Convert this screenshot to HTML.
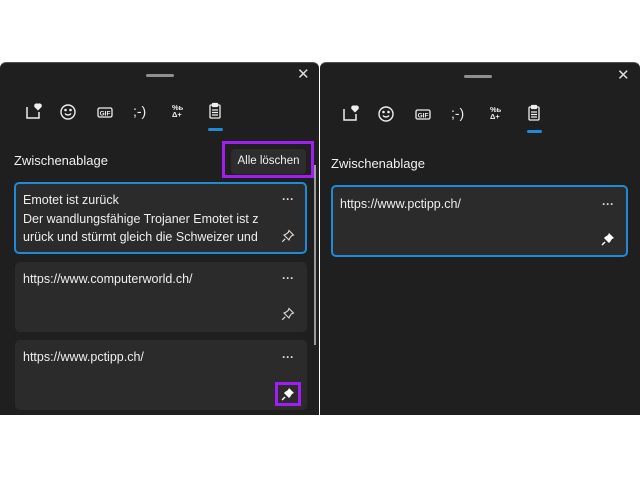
<!DOCTYPE html>
<html><head><meta charset="utf-8"><style>
*{margin:0;padding:0;box-sizing:border-box}
body{width:640px;height:480px;background:#fff;position:relative;overflow:hidden;font-family:"Liberation Sans",sans-serif;color:#f0f0f0}
.p{position:absolute;top:62px;height:353px;background:#1f1f1f;border-top:1px solid #555;border-radius:6px 6px 0 0}
.a{position:absolute}
.h{height:3px;width:28px;background:#8f8f8f;border-radius:2px}
.x{font-size:15px;color:#ddd;line-height:1}
.t{font-size:13px}
.card{position:absolute;background:#2b2b2b;border-radius:5px}
.sel{border:2px solid #1f8ad8}
.dots{position:absolute;font-size:12px;font-weight:bold;color:#ddd;line-height:1}
.ic{position:absolute;width:18px;height:18px}
.ul{height:3px;width:15px;background:#1f8ad8;border-radius:2px}
.tx{position:absolute;font-size:12.5px;line-height:18.5px;color:#eee}
</style></head><body>

<div class="p" style="left:0;width:319px"></div>
<div class="p" style="left:320px;width:320px"></div>

<!-- left -->
<div class="a h" style="left:146px;top:74px"></div>
<div class="a x" style="left:297px;top:67px">✕</div>
<svg class="ic" style="left:24px;top:103px" viewBox="0 0 18 18" fill="none" stroke="#eee" stroke-width="1.5"><path d="M3 4v11h12V9"/><path d="M11 2c1-1.5 3-1 3 .5 0-1.5 2-2 3-.5v1.5l-3 3-3-3z" fill="#eee"/></svg>
<svg class="ic" style="left:59px;top:103px" viewBox="0 0 18 18" fill="none" stroke="#eee" stroke-width="1.4"><circle cx="9" cy="9" r="7"/><path d="M6 10.5c1.5 2 4.5 2 6 0"/><circle cx="6.5" cy="7" r=".6" fill="#eee"/><circle cx="11.5" cy="7" r=".6" fill="#eee"/></svg>
<svg class="ic" style="left:96px;top:103px" viewBox="0 0 18 18"><rect x="2" y="5" width="14" height="9" rx="1.5" fill="none" stroke="#eee" stroke-width="1.3"/><text x="9" y="12.3" font-size="6.5" font-weight="bold" fill="#eee" text-anchor="middle" font-family="Liberation Sans">GIF</text></svg>
<div class="a" style="left:133px;top:103px;font-size:14px;color:#eee">;-)</div>
<div class="a" style="left:172px;top:104px;font-size:7.5px;line-height:7px;font-weight:bold;color:#eee">%ь<br>Δ+</div>
<svg class="ic" style="left:206px;top:102px" viewBox="0 0 18 18" fill="none" stroke="#eee" stroke-width="1.3"><rect x="4" y="3" width="10" height="13" rx="1"/><rect x="6.5" y="1.5" width="5" height="3" rx=".5" fill="#eee"/><path d="M6 8h6M6 10.5h6M6 13h6"/></svg>
<div class="a ul" style="left:208px;top:128px"></div>

<div class="a t" style="left:14px;top:153px">Zwischenablage</div>
<div class="a" style="left:222px;top:141px;width:92px;height:37px;border:3px solid #a01ff0"></div>
<div class="a" style="left:231px;top:149px;width:75px;height:25px;background:#2d2d2d;border-radius:4px;font-size:11.5px;text-align:center;line-height:25px">Alle löschen</div>
<div class="a" style="left:314px;top:165px;width:2px;height:180px;background:#9a9a9a"></div>

<div class="card sel" style="left:14px;top:182px;width:293px;height:72px"></div>
<div class="tx" style="left:23px;top:191px">Emotet ist zurück<br>Der wandlungsfähige Trojaner Emotet ist z<br>urück und stürmt gleich die Schweizer und</div>
<div class="dots" style="left:282px;top:193px">···</div>
<svg class="a" style="left:281px;top:229px" width="14" height="14" viewBox="0 0 14 14" fill="none" stroke="#ddd" stroke-width="1.1"><path d="M8 1.5l4.5 4.5-2 .8-2 2.7-.5 1.5-5-5 1.5-.5 2.7-2z"/><path d="M4.2 9.8l-3 3"/></svg>

<div class="card" style="left:15px;top:262px;width:292px;height:70px"></div>
<div class="tx" style="left:23px;top:270px">https://www.computerworld.ch/</div>
<div class="dots" style="left:282px;top:272px">···</div>
<svg class="a" style="left:281px;top:307px" width="14" height="14" viewBox="0 0 14 14" fill="none" stroke="#ddd" stroke-width="1.1"><path d="M8 1.5l4.5 4.5-2 .8-2 2.7-.5 1.5-5-5 1.5-.5 2.7-2z"/><path d="M4.2 9.8l-3 3"/></svg>

<div class="card" style="left:15px;top:340px;width:292px;height:70px"></div>
<div class="tx" style="left:23px;top:348px">https://www.pctipp.ch/</div>
<div class="dots" style="left:282px;top:351px">···</div>
<div class="a" style="left:275px;top:382px;width:26px;height:24px;border:3px solid #a01ff0"></div>
<svg class="a" style="left:281px;top:387px" width="14" height="14" viewBox="0 0 14 14"><path d="M8 1l5 5-2 1-2 3-1 1-5-5 1-1 3-2z" fill="#fff"/><path d="M4 10l-3 3" stroke="#fff" stroke-width="1.4"/></svg>

<!-- right -->
<div class="a h" style="left:464px;top:75px"></div>
<div class="a x" style="left:617px;top:68px">✕</div>
<svg class="ic" style="left:341px;top:105px" viewBox="0 0 18 18" fill="none" stroke="#eee" stroke-width="1.5"><path d="M3 4v11h12V9"/><path d="M11 2c1-1.5 3-1 3 .5 0-1.5 2-2 3-.5v1.5l-3 3-3-3z" fill="#eee"/></svg>
<svg class="ic" style="left:377px;top:105px" viewBox="0 0 18 18" fill="none" stroke="#eee" stroke-width="1.4"><circle cx="9" cy="9" r="7"/><path d="M6 10.5c1.5 2 4.5 2 6 0"/><circle cx="6.5" cy="7" r=".6" fill="#eee"/><circle cx="11.5" cy="7" r=".6" fill="#eee"/></svg>
<svg class="ic" style="left:414px;top:105px" viewBox="0 0 18 18"><rect x="2" y="5" width="14" height="9" rx="1.5" fill="none" stroke="#eee" stroke-width="1.3"/><text x="9" y="12.3" font-size="6.5" font-weight="bold" fill="#eee" text-anchor="middle" font-family="Liberation Sans">GIF</text></svg>
<div class="a" style="left:451px;top:105px;font-size:14px;color:#eee">;-)</div>
<div class="a" style="left:490px;top:106px;font-size:7.5px;line-height:7px;font-weight:bold;color:#eee">%ь<br>Δ+</div>
<svg class="ic" style="left:525px;top:104px" viewBox="0 0 18 18" fill="none" stroke="#eee" stroke-width="1.3"><rect x="4" y="3" width="10" height="13" rx="1"/><rect x="6.5" y="1.5" width="5" height="3" rx=".5" fill="#eee"/><path d="M6 8h6M6 10.5h6M6 13h6"/></svg>
<div class="a ul" style="left:527px;top:130px"></div>

<div class="a t" style="left:331px;top:156px">Zwischenablage</div>
<div class="card sel" style="left:331px;top:185px;width:297px;height:72px"></div>
<div class="tx" style="left:340px;top:195px">https://www.pctipp.ch/</div>
<div class="dots" style="left:602px;top:198px">···</div>
<svg class="a" style="left:601px;top:232px" width="14" height="14" viewBox="0 0 14 14"><path d="M8 1l5 5-2 1-2 3-1 1-5-5 1-1 3-2z" fill="#fff"/><path d="M4 10l-3 3" stroke="#fff" stroke-width="1.4"/></svg>
</body></html>
